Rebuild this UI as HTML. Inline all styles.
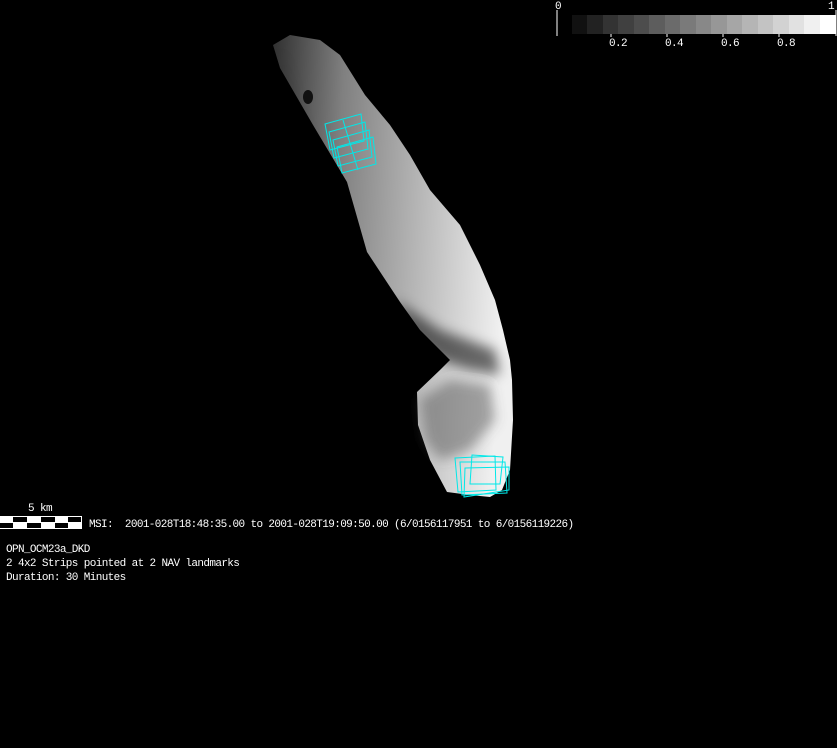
<!DOCTYPE html>
<html><head><style>
html,body{margin:0;padding:0;background:#000;width:837px;height:748px;overflow:hidden}
.t{position:absolute;font-family:"Liberation Mono","DejaVu Sans Mono",monospace;font-size:11px;letter-spacing:-0.62px;color:#fff;white-space:pre;line-height:12px}
</style></head><body>
<svg width="837" height="748" style="position:absolute;left:0;top:0">
<defs>
<linearGradient id="g" x1="0" y1="0" x2="1" y2="0.1">
<stop offset="0" stop-color="#303030"/>
<stop offset="0.3" stop-color="#808080"/>
<stop offset="0.6" stop-color="#b0b0b0"/>
<stop offset="0.85" stop-color="#d8d8d8"/>
<stop offset="1" stop-color="#f0f0f0"/>
</linearGradient>
<filter id="b"><feGaussianBlur stdDeviation="6"/></filter>
</defs>
<path d="M273,45 L290,35 L320,40 L340,55 L365,95 L390,125 L410,155 L430,190 L460,225 L480,265 L495,300 L503,330 L510,360 L512,380 L513,420 L510,470 L502,490 L490,497 L470,495 L447,492 L430,460 L418,425 L417,392 L440,370 L450,360 L420,330 L400,302 L367,252 L347,182 L313,125 L280,68 Z" fill="url(#g)"/>
<g filter="url(#b)">
<path d="M395,300 L440,330 L495,350 L500,375 L470,370 L440,360 L410,335 Z" fill="#000" opacity="0.55"/>
<path d="M280,50 L300,120 L330,180 L345,240 L330,200 L300,140 Z" fill="#000" opacity="0.3"/>
<path d="M420,400 L450,380 L490,385 L495,420 L470,450 L440,460 L425,440 Z" fill="#555" opacity="0.5"/>
</g>
<ellipse cx="308" cy="97" rx="5" ry="7" fill="#111"/>
<g fill="none" stroke="#00e8e8" stroke-width="1">
<polygon points="325,124 361,114 364,141 330,150"/>
<polygon points="329,132 365,122 368,149 334,158"/>
<polygon points="333,140 369,130 372,157 338,166"/>
<polygon points="337,147 373,137 376,164 342,173"/>
<line x1="343" y1="120" x2="358" y2="170"/>
<polygon points="455,458 495,456 496,490 458,492"/>
<polygon points="460,462 505,462 507,493 462,495"/>
<polygon points="472,455 503,457 500,484 470,484"/>
<polygon points="465,468 509,467 509,490 464,497"/>
</g>
<line x1="557" y1="10" x2="557" y2="36" stroke="#fff"/>
<line x1="836" y1="10" x2="836" y2="36" stroke="#fff"/>
<g>
<rect x="572" y="15" width="16" height="19" fill="#111"/>
<rect x="587" y="15" width="16" height="19" fill="#222"/>
<rect x="603" y="15" width="16" height="19" fill="#333"/>
<rect x="618" y="15" width="16" height="19" fill="#404040"/>
<rect x="634" y="15" width="16" height="19" fill="#4d4d4d"/>
<rect x="649" y="15" width="16" height="19" fill="#5d5d5d"/>
<rect x="665" y="15" width="16" height="19" fill="#6b6b6b"/>
<rect x="680" y="15" width="16" height="19" fill="#7a7a7a"/>
<rect x="696" y="15" width="16" height="19" fill="#888"/>
<rect x="711" y="15" width="16" height="19" fill="#979797"/>
<rect x="727" y="15" width="16" height="19" fill="#a6a6a6"/>
<rect x="742" y="15" width="16" height="19" fill="#b5b5b5"/>
<rect x="758" y="15" width="16" height="19" fill="#c3c3c3"/>
<rect x="773" y="15" width="16" height="19" fill="#d2d2d2"/>
<rect x="789" y="15" width="16" height="19" fill="#e1e1e1"/>
<rect x="804" y="15" width="16" height="19" fill="#f0f0f0"/>
<rect x="820" y="15" width="16" height="19" fill="#fff"/>
</g>
<g stroke="#fff"><line x1="611" y1="34" x2="611" y2="37"/><line x1="667" y1="34" x2="667" y2="37"/><line x1="723" y1="34" x2="723" y2="37"/><line x1="779" y1="34" x2="779" y2="37"/></g>
<rect x="0" y="516" width="82" height="13" fill="#fff"/>
<g fill="#000">
<rect x="13" y="517" width="14" height="5"/><rect x="41" y="517" width="14" height="5"/><rect x="68" y="517" width="13" height="5"/>
<rect x="0" y="523" width="13" height="5"/><rect x="27" y="523" width="14" height="5"/><rect x="55" y="523" width="13" height="5"/>
</g>
</svg>
<div class="t" style="left:555px;top:1px">0</div>
<div class="t" style="left:828px;top:1px">1</div>
<div class="t" style="left:609px;top:38px">0.2</div>
<div class="t" style="left:665px;top:38px">0.4</div>
<div class="t" style="left:721px;top:38px">0.6</div>
<div class="t" style="left:777px;top:38px">0.8</div>
<div class="t" style="left:28px;top:503px">5 km</div>
<div class="t" style="left:89px;top:519px">MSI:  2001-028T18:48:35.00 to 2001-028T19:09:50.00 (6/0156117951 to 6/0156119226)</div>
<div class="t" style="left:6px;top:544px">OPN_OCM23a_DKD</div>
<div class="t" style="left:6px;top:558px">2 4x2 Strips pointed at 2 NAV landmarks</div>
<div class="t" style="left:6px;top:572px">Duration: 30 Minutes</div>
</body></html>
